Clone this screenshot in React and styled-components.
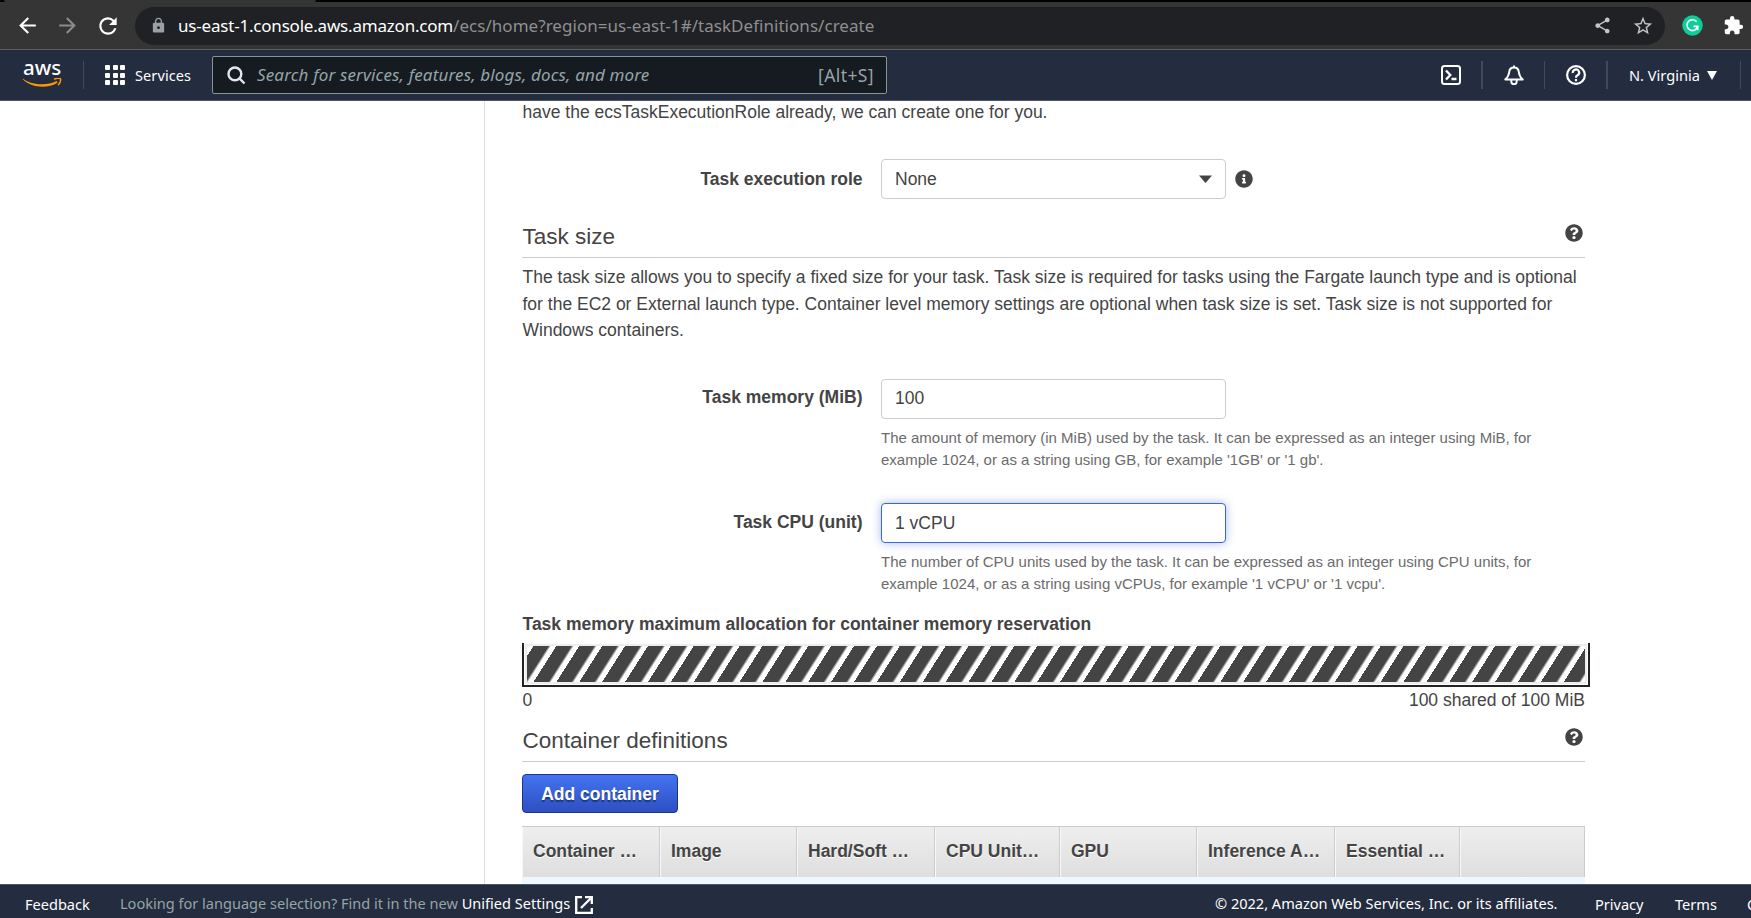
import React from "react";
import styled, { createGlobalStyle } from "styled-components";
import { MdArrowBack, MdArrowForward, MdRefresh, MdLock, MdShare, MdStarBorder, MdExtension } from "react-icons/md";
import { FaInfoCircle, FaQuestionCircle } from "react-icons/fa";

const Global = createGlobalStyle`
  * { box-sizing: border-box; }
  body { margin: 0; background: #fff; overflow: hidden; }
`;

const ember = `"Noto Sans", "Open Sans", sans-serif`;
const helvetica = `"Liberation Sans", Arial, sans-serif`;

const Page = styled.div`
  width: 1751px;
  height: 918px;
  display: flex;
  flex-direction: column;
  overflow: hidden;
  font-family: ${helvetica};
  font-size: 17.5px;
  color: #444;
`;

/* ---------- browser chrome ---------- */
const TabStrip = styled.div`
  flex: none;
  height: 2px;
  background: #000;
`;
const ActiveTab = styled.div`
  width: 312px;
  height: 2px;
  margin-left: 4px;
  background: #353535;
  border-radius: 0 0 2px 2px;
`;
const BrowserBar = styled.div`
  flex: none;
  height: 48px;
  display: flex;
  align-items: center;
  padding: 0 8px 0 15px;
  background: #353535;
  border-bottom: 1px solid #5d5d5f;
`;
const ToolIcon = styled.span`
  display: flex;
  flex: none;
  width: ${(p) => p.$w || 24}px;
  margin-left: ${(p) => p.$gap || 0}px;
  color: ${(p) => p.$color || "#fff"};
  svg { display: block; flex: none; }
`;
const AddressBar = styled.div`
  flex: none;
  width: 1530px;
  height: 38px;
  margin-left: 14px;
  padding: 0 11px 0 15px;
  border-radius: 19px;
  background: #202124;
  display: flex;
  align-items: center;
`;
const Url = styled.span`
  flex: 1;
  margin-left: 11px;
  font: 17px/38px ${ember};
  letter-spacing: 0.04px;
  white-space: nowrap;
  color: #8f8f90;
`;
const Host = styled.span`
  letter-spacing: -0.2px;
  color: #fff;
`;

/* ---------- AWS navigation ---------- */
const NavBar = styled.header`
  flex: none;
  height: 51px;
  display: flex;
  align-items: center;
  background: #242c3f;
  border-bottom: 1px solid #4c5563;
  font-family: ${ember};
  color: #fff;
`;
const Logo = styled.div`
  width: 40px;
  height: 26px;
  margin-left: 22px;
  display: flex;
  flex-direction: column;
`;
const LogoWord = styled.span`
  height: 17px;
  padding-left: 1px;
  font: 500 20.5px/11px ${ember};
`;
const Divider = styled.span`
  width: ${(p) => p.$w || 1}px;
  height: 28px;
  margin-left: ${(p) => p.$gap}px;
  background: #42495a;
`;
const ServicesButton = styled.div`
  width: 107px;
  margin-left: 21px;
  display: flex;
  align-items: center;
  gap: 10px;
  font-size: 14.5px;
  line-height: 18px;
  letter-spacing: 0.1px;
`;
const AppsGrid = styled.span`
  display: grid;
  grid-template-columns: repeat(3, 5px);
  gap: 2.5px;
  span { height: 5px; border-radius: 1px; background: #fff; }
`;
const SearchBox = styled.div`
  width: 675px;
  height: 38px;
  padding: 0 12px 0 14px;
  display: flex;
  align-items: center;
  border: 1px solid #879596;
  border-radius: 2px;
  background: #161a21;
  color: #95a5a6;
  font-size: 17px;
`;
const Placeholder = styled.span`
  flex: 1;
  margin-left: 11px;
  font-style: italic;
  letter-spacing: 0.15px;
  line-height: 38px;
  white-space: nowrap;
`;
const Shortcut = styled.span`
  font-size: 17.5px;
  letter-spacing: 0.4px;
  line-height: 38px;
`;
const NavIcon = styled.span`
  width: 20px;
  height: 20px;
  margin-left: ${(p) => p.$gap}px;
  svg { display: block; }
`;
const Region = styled.span`
  width: 88px;
  margin-left: 21px;
  display: flex;
  align-items: center;
  justify-content: space-between;
  font-size: 14.6px;
  line-height: 18px;
  white-space: nowrap;
`;

/* ---------- content ---------- */
const Body = styled.div`
  flex: none;
  height: 783px;
  display: flex;
  overflow: hidden;
  background: #fff;
`;
const SideSpace = styled.aside`
  flex: none;
  width: 485px;
  border-right: 1px solid #ddd;
`;
const Content = styled.main`
  width: 1100px;
  padding-left: 37px;
`;
const Paragraph = styled.p`
  margin: ${(p) => p.$top}px 0 0 0.5px;
  line-height: ${(p) => p.$lh || 26.5}px;
  white-space: nowrap;
`;
const FormRow = styled.div`
  display: flex;
  align-items: flex-start;
  margin-top: ${(p) => p.$top}px;
`;
const Label = styled.label`
  width: 340.5px;
  margin-right: 18.5px;
  line-height: ${(p) => p.$lh || 37}px;
  text-align: right;
  font-weight: 700;
`;
const Select = styled.div`
  width: 345px;
  height: 40px;
  padding: 0 13px;
  display: flex;
  align-items: center;
  justify-content: space-between;
  border: 1px solid #ccc;
  border-radius: 4px;
`;
const Field = styled.div`
  width: 665px;
`;
const Input = styled.input`
  display: block;
  width: 345px;
  height: 40px;
  padding: 0 13px ${(p) => (p.$active ? 0 : 2)}px;
  border: 1px solid ${(p) => (p.$active ? "#3a67da" : "#ccc")};
  border-radius: 4px;
  outline: none;
  box-shadow: ${(p) => (p.$active ? "0 0 10px rgba(60,105,225,.45)" : "none")};
  font: 17.5px ${helvetica};
  color: #444;
`;
const Hint = styled.div`
  margin-top: 8px;
  height: 45px;
  font-size: 15px;
  line-height: 22px;
  color: #6b6b6b;
  white-space: nowrap;
`;
const InfoMark = styled.span`
  margin: 11px 0 0 9px;
  svg { display: block; }
`;
const SectionHead = styled.div`
  height: 41px;
  margin-top: ${(p) => p.$top}px;
  padding: 0 2px 0 0.5px;
  display: flex;
  justify-content: space-between;
  border-bottom: 1px solid #ccc;
  svg { margin-top: 7px; }
`;
const SectionTitle = styled.h2`
  margin: 0;
  font-size: 22.5px;
  line-height: 39px;
  font-weight: 400;
`;
const BarTitle = styled.div`
  margin: 15px 0 6px 0.5px;
  line-height: 26px;
  font-weight: 700;
`;
const Gauge = styled.div`
  width: 1068px;
  height: 44px;
  padding: 1px;
  border: 2px solid #222;
  border-top: 0;
`;
const GaugeFill = styled.div`
  height: 40px;
  border: 2px solid #e9eeee;
  background: repeating-linear-gradient(122.45deg, #aaa 0, #fff 1px, #fff 5.4px, #444 5.5px, #444 18px, #aaa 19.32px);
  background-origin: padding-box;
  background-clip: padding-box;
`;
const GaugeScale = styled.div`
  display: flex;
  justify-content: space-between;
  padding-left: 0.5px;
  line-height: 26px;
`;
const PrimaryButton = styled.button`
  display: block;
  width: 156px;
  height: 39px;
  margin: 12px 0 13px;
  padding: 2px 0 0;
  border: 1px solid #1c3584;
  border-radius: 4px;
  background: linear-gradient(#4374f0, #2e4fc1);
  color: #fff;
  font: 700 17.5px ${helvetica};
  text-shadow: 0 2px 1px rgba(0, 0, 0, 0.4);
`;
const TableHead = styled.div`
  display: grid;
  grid-template-columns: 138px 137px 138px 125px 137px 138px 125px 125px;
  height: 51px;
  border-top: 1px solid #ccc;
  background: linear-gradient(#eee, #dedede);
`;
const HeadCell = styled.div`
  padding-left: 11px;
  border-right: 1px solid #ccc;
  box-shadow: inset 1px 0 #f8f8f8;
  line-height: 48px;
  font-weight: 700;
  text-shadow: 0 1px #fff;
  white-space: nowrap;
`;
const TableRow = styled.div`
  height: 8px;
  background: #f0f8ff;
`;

/* ---------- footer ---------- */
const Footer = styled.footer`
  flex: none;
  height: 34px;
  display: flex;
  border-top: 1px solid #4c5563;
  background: #242c3f;
  font: 14.55px/39px ${ember};
  color: #fff;
  white-space: nowrap;
`;
const FooterItem = styled.span`
  flex: none;
  width: ${(p) => p.$w}px;
  margin-left: ${(p) => p.$gap || 0}px;
  line-height: ${(p) => p.$lh || 39}px;
`;
const Muted = styled.span`
  color: #95a5a6;
`;
const ExternalMark = styled.svg`
  flex: none;
  margin: 11px 622px 0 0;
`;

const columns = ["Container …", "Image", "Hard/Soft …", "CPU Unit…", "GPU", "Inference A…", "Essential …", ""];

export default function App() {
  return (
    <Page>
      <Global />
      <TabStrip><ActiveTab /></TabStrip>
      <BrowserBar>
        <ToolIcon><MdArrowBack size={25} /></ToolIcon>
        <ToolIcon $gap={16} $color="#8b8b8b"><MdArrowForward size={25} /></ToolIcon>
        <ToolIcon $gap={16} $w={26}><MdRefresh size={26} /></ToolIcon>
        <AddressBar>
          <ToolIcon $color="#9aa0a6" $w={17}><MdLock size={17} /></ToolIcon>
          <Url><Host>us-east-1.console.aws.amazon.com</Host>/ecs/home?region=us-east-1#/taskDefinitions/create</Url>
          <ToolIcon $color="#c4c4c5" $w={20}><MdShare size={19} /></ToolIcon>
          <ToolIcon $color="#c4c4c5" $w={22} $gap={19}><MdStarBorder size={22} /></ToolIcon>
        </AddressBar>
        <ToolIcon $gap={17} $w={21}>
          <svg width="21" height="21" viewBox="0 0 21 21" fill="none">
            <circle cx="10.5" cy="10.5" r="10.2" fill="#0bcf98" />
            <path d="M14.6 6.7A5.4 5.4 0 1 0 15.7 11.4H11.5M15.7 11.4V15.2" stroke="#fff" strokeWidth="1.6" />
          </svg>
        </ToolIcon>
        <ToolIcon $gap={20} $w={22}><MdExtension size={21} /></ToolIcon>
      </BrowserBar>

      <NavBar>
        <Logo>
          <LogoWord>aws</LogoWord>
          <svg width="40" height="10" viewBox="0 0 40 10" fill="none">
            <path d="M0 0.4C10 8 26 8 35 3.1L36.3 4.6C26 11.7 8.5 10.3 0 1.4Z" fill="#ff9900" />
            <path d="M32.5 1.3C35 0 38.5 0 39.2 0.8C39.6 2.5 38.7 5.5 36.7 7.5" stroke="#ff9900" strokeWidth="1.5" />
          </svg>
        </Logo>
        <Divider $gap={21} />
        <ServicesButton>
          <AppsGrid>{Array.from({ length: 9 }, (_, i) => <span key={i} />)}</AppsGrid>
          Services
        </ServicesButton>
        <SearchBox>
          <svg width="19" height="19" viewBox="0 0 19 19" fill="none" stroke="#e3e7e7" strokeWidth="2.4">
            <circle cx="7.9" cy="7.9" r="6.4" /><path d="M12.4 12.4L17.5 17.5" />
          </svg>
          <Placeholder>Search for services, features, blogs, docs, and more</Placeholder>
          <Shortcut>[Alt+S]</Shortcut>
        </SearchBox>
        <NavIcon $gap={554}>
          <svg width="20" height="20" viewBox="0 0 20 20" fill="none" stroke="#fff" strokeWidth="2">
            <rect x="1" y="1" width="18" height="18" rx="2.5" />
            <path d="M5 5.5L9.3 10L5 14.5M10.5 14H15.5" strokeWidth="2.3" />
          </svg>
        </NavIcon>
        <Divider $gap={20} $w={2} />
        <NavIcon $gap={21}>
          <svg width="20" height="20" viewBox="0 0 20 20" fill="none" stroke="#fff" strokeWidth="2" strokeLinejoin="round">
            <path d="M10 0.5V3M1.3 14.5C4 12 5 10.5 5.2 7C5.5 4 7.5 2.6 10 2.6S14.5 4 14.8 7C15 10.5 16 12 18.7 14.5Z" />
            <path d="M7.3 15V16.5A2.7 2.7 0 0 0 12.7 16.5V15" />
          </svg>
        </NavIcon>
        <Divider $gap={20} />
        <NavIcon $gap={21}>
          <svg width="20" height="20" viewBox="0 0 20 20" fill="none" stroke="#fff" strokeWidth="2.2">
            <circle cx="10" cy="10" r="8.9" />
            <path d="M6.8 8A3.2 3.1 0 1 1 11.5 10.3Q10 11 10 12.7M10 14V16.200" />
          </svg>
        </NavIcon>
        <Divider $gap={20} $w={2} />
        <Region>
          N. Virginia
          <svg width="10" height="9" viewBox="0 0 10 9"><path d="M0 0H10L5 9Z" fill="#fff" /></svg>
        </Region>
        <Divider $gap={23} />
      </NavBar>

      <Body>
        <SideSpace />
        <Content>
          <Paragraph $top={0} $lh={22}>have the ecsTaskExecutionRole already, we can create one for you.</Paragraph>
          <FormRow $top={36}>
            <Label $lh={40}>Task execution role</Label>
            <Select>
              None
              <svg width="13" height="8" viewBox="0 0 13 8"><path d="M0 0.500H13L6.500 8Z" fill="#444" /></svg>
            </Select>
            <InfoMark><FaInfoCircle size={18} /></InfoMark>
          </FormRow>

          <SectionHead $top={18}>
            <SectionTitle>Task size</SectionTitle>
            <FaQuestionCircle size={18} />
          </SectionHead>
          <Paragraph $top={6}>
            The task size allows you to specify a fixed size for your task. Task size is required for tasks using the Fargate launch type and is optional<br />
            for the EC2 or External launch type. Container level memory settings are optional when task size is set. Task size is not supported for<br />
            Windows containers.
          </Paragraph>

          <FormRow $top={35.5}>
            <Label>Task memory (MiB)</Label>
            <Field>
              <Input defaultValue="100" />
              <Hint>
                The amount of memory (in MiB) used by the task. It can be expressed as an integer using MiB, for<br />
                example 1024, or as a string using GB, for example '1GB' or '1 gb'.
              </Hint>
            </Field>
          </FormRow>
          <FormRow $top={31}>
            <Label $lh={38}>Task CPU (unit)</Label>
            <Field>
              <Input $active defaultValue="1 vCPU" />
              <Hint>
                The number of CPU units used by the task. It can be expressed as an integer using CPU units, for<br />
                example 1024, or as a string using vCPUs, for example '1 vCPU' or '1 vcpu'.
              </Hint>
            </Field>
          </FormRow>

          <BarTitle>Task memory maximum allocation for container memory reservation</BarTitle>
          <Gauge><GaugeFill /></Gauge>
          <GaugeScale><span>0</span><span>100 shared of 100 MiB</span></GaugeScale>

          <SectionHead $top={8}>
            <SectionTitle>Container definitions</SectionTitle>
            <FaQuestionCircle size={18} />
          </SectionHead>
          <PrimaryButton>Add container</PrimaryButton>
          <TableHead>
            {columns.map((name, i) => <HeadCell key={i}>{name}</HeadCell>)}
          </TableHead>
          <TableRow />
        </Content>
      </Body>

      <Footer>
        <FooterItem $w={95} $gap={25}>Feedback</FooterItem>
        <FooterItem $w={455} $lh={37}><Muted>Looking for language selection? Find it in the new </Muted>Unified Settings</FooterItem>
        <ExternalMark width="18" height="18" viewBox="0 0 18 18" fill="none" stroke="#fff" strokeWidth="2.300">
          <path d="M7 1.200H1.200V16.800H16.800V12M10 1.200H16.800V8M16.500 1.500L6 12" />
        </ExternalMark>
        <FooterItem $w={380} $lh={37}>© 2022, Amazon Web Services, Inc. or its affiliates.</FooterItem>
        <FooterItem $w={80}>Privacy</FooterItem>
        <FooterItem $w={72}>Terms</FooterItem>
        <FooterItem $w={140}>Cookie preferences</FooterItem>
      </Footer>
    </Page>
  );
}
